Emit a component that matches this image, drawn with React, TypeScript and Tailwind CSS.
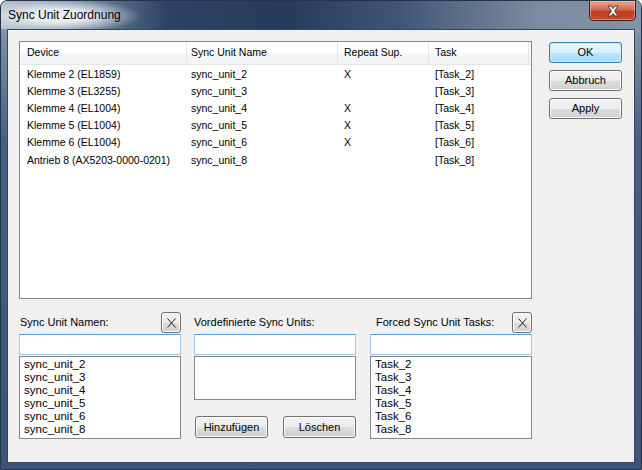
import React from 'react';

const rows = [
  ['Klemme 2 (EL1859)', 'sync_unit_2', 'X', '[Task_2]'],
  ['Klemme 3 (EL3255)', 'sync_unit_3', '', '[Task_3]'],
  ['Klemme 4 (EL1004)', 'sync_unit_4', 'X', '[Task_4]'],
  ['Klemme 5 (EL1004)', 'sync_unit_5', 'X', '[Task_5]'],
  ['Klemme 6 (EL1004)', 'sync_unit_6', 'X', '[Task_6]'],
  ['Antrieb 8 (AX5203-0000-0201)', 'sync_unit_8', '', '[Task_8]'],
];

const unitNames = ['sync_unit_2', 'sync_unit_3', 'sync_unit_4', 'sync_unit_5', 'sync_unit_6', 'sync_unit_8'];
const tasks = ['Task_2', 'Task_3', 'Task_4', 'Task_5', 'Task_6', 'Task_8'];

const btn =
  'flex items-center justify-center rounded-[3px] border border-[#707070] bg-[linear-gradient(180deg,#f2f2f2_0%,#ebebeb_50%,#dddddd_51%,#cfcfcf_100%)] shadow-[inset_0_0_0_1px_#fcfcfc] text-[11px] text-black';

const input =
  'h-[21px] w-full border border-[#a4c9e3] border-t-[#5b9acb] bg-white';

function ClearButton() {
  return (
    <button className={`${btn} h-[21px] w-[20px]`}>
      <svg width="9" height="10" viewBox="0 0 9 10">
        <path d="M0.5 0.5 L8.5 9.5 M8.5 0.5 L0.5 9.5" stroke="#222" strokeWidth="1" fill="none" />
      </svg>
    </button>
  );
}

function ListBox({ items, className }: { items: string[]; className: string }) {
  return (
    <div className={`mt-px w-full border border-[#828790] bg-white pt-[1px] ${className}`}>
      {items.map((t) => (
        <div key={t} className="h-[13px] text-[11.5px] leading-[13px]">
          {t}
        </div>
      ))}
    </div>
  );
}

export default function App() {
  return (
    <div className="h-[470px] w-[642px] overflow-hidden bg-white font-['Liberation_Sans',Arial,sans-serif] text-black">
      <div className="flex h-[470px] w-[642px] flex-col rounded-t-[7px] border border-[#24344a] bg-[linear-gradient(180deg,#a9b6c4_0%,#7a8ea6_8%,#45607f_30%,#3a5577_100%)]">
        {/* Title bar */}
        <div className="flex h-[28px] items-start justify-between rounded-t-[6px] bg-[radial-gradient(ellipse_82px_17px_at_58px_15px,rgba(236,240,244,0.97)_35%,rgba(236,240,244,0)_100%),linear-gradient(90deg,#b6c2ce_0%,#6b8099_14%,#2c4262_26%,#263c5a_45%,#405673_62%,#7b8ca0_84%,#8193a6_100%)]">
          <span className="pl-[7px] pt-[7px] text-[12px] leading-[15px] text-black">Sync Unit Zuordnung</span>
          <div className="mr-[5px] flex h-[20px] w-[47px] items-center justify-center rounded-b-[5px] border border-t-0 border-[#4a1a12] bg-[linear-gradient(180deg,#e8a593_0%,#d46a52_45%,#c0401f_55%,#c54a2a_100%)] shadow-[inset_0_0_0_1px_rgba(255,200,180,0.5)]">
            <svg width="14" height="12" viewBox="0 0 14 12">
              <path
                d="M2 1 L5 1 L7 3.5 L9 1 L12 1 L8.6 6 L12 11 L9 11 L7 8.5 L5 11 L2 11 L5.4 6 Z"
                fill="#ffffff"
                stroke="#4a2a25"
                strokeWidth="0.9"
              />
            </svg>
          </div>
        </div>

        {/* Client area */}
        <div className="mx-[6px] mb-[6px] flex flex-1 flex-col border border-[#33475f] bg-[#f0f0f0] pl-[11px] pt-[11px]">
          <div className="flex">
            {/* List view */}
            <div className="h-[258px] w-[513px] border border-[#828790] bg-white text-[10.5px]">
              <div className="flex h-[23px] border-b border-[#e5e5e5] bg-[linear-gradient(180deg,#ffffff_0%,#ffffff_50%,#f6f7f8_51%,#f2f3f5_100%)]">
                <div className="flex w-[167px] items-center border-r border-[#e3e6ea] pl-[7px]">Device</div>
                <div className="flex w-[151px] items-center border-r border-[#e3e6ea] pl-[4px]">Sync Unit Name</div>
                <div className="flex w-[91px] items-center border-r border-[#e3e6ea] pl-[6px]">Repeat Sup.</div>
                <div className="flex w-[100px] items-center border-r border-[#e3e6ea] pl-[6px]">Task</div>
              </div>
              <div className="pt-[1px]">
                {rows.map((r) => (
                  <div key={r[0]} className="flex h-[17.2px] items-center">
                    <div className="w-[167px] pl-[7px]">{r[0]}</div>
                    <div className="w-[151px] pl-[4px]">{r[1]}</div>
                    <div className="w-[91px] pl-[6px]">{r[2]}</div>
                    <div className="w-[100px] pl-[6px]">{r[3]}</div>
                  </div>
                ))}
              </div>
            </div>

            {/* Dialog buttons */}
            <div className="ml-[17px] flex flex-col gap-[7px] pt-[1px]">
              <button className="flex h-[21px] w-[73px] items-center justify-center rounded-[3px] border border-[#3c7fb1] bg-[linear-gradient(180deg,#eaf6fd_0%,#d9f0fc_50%,#bee6fd_51%,#a7d9f5_100%)] shadow-[inset_0_0_0_1px_#c9ebfd] text-[11px]">
                OK
              </button>
              <button className={`${btn} h-[21px] w-[73px]`}>Abbruch</button>
              <button className={`${btn} h-[21px] w-[73px]`}>Apply</button>
            </div>
          </div>

          {/* Lower section */}
          <div className="mt-[13px] flex text-[11px]">
            <div className="flex w-[162px] flex-col">
              <div className="flex h-[21px] items-center justify-between">
                <span className="pl-[1px]">Sync Unit Namen:</span>
                <ClearButton />
              </div>
              <div className="mt-[1px]">
                <div className={input} />
                <ListBox items={unitNames} className="h-[83px] pl-[4px]" />
              </div>
            </div>

            <div className="ml-[13px] flex w-[162px] flex-col">
              <div className="flex h-[21px] items-center">
                <span>Vordefinierte Sync Units:</span>
              </div>
              <div className="mt-[1px]">
                <div className={input} />
                <div className="mt-px h-[44px] w-full border border-[#828790] bg-white" />
              </div>
              <div className="mt-[16px] flex justify-between pl-[1px]">
                <button className={`${btn} h-[22px] w-[73px]`}>Hinzufügen</button>
                <button className={`${btn} h-[22px] w-[73px]`}>Löschen</button>
              </div>
            </div>

            <div className="ml-[14px] flex w-[162px] flex-col">
              <div className="flex h-[21px] items-center justify-between">
                <span className="pl-[6px]">Forced Sync Unit Tasks:</span>
                <ClearButton />
              </div>
              <div className="mt-[1px]">
                <div className={input} />
                <ListBox items={tasks} className="h-[83px] pl-[4px]" />
              </div>
            </div>
          </div>
        </div>
      </div>
    </div>
  );
}
